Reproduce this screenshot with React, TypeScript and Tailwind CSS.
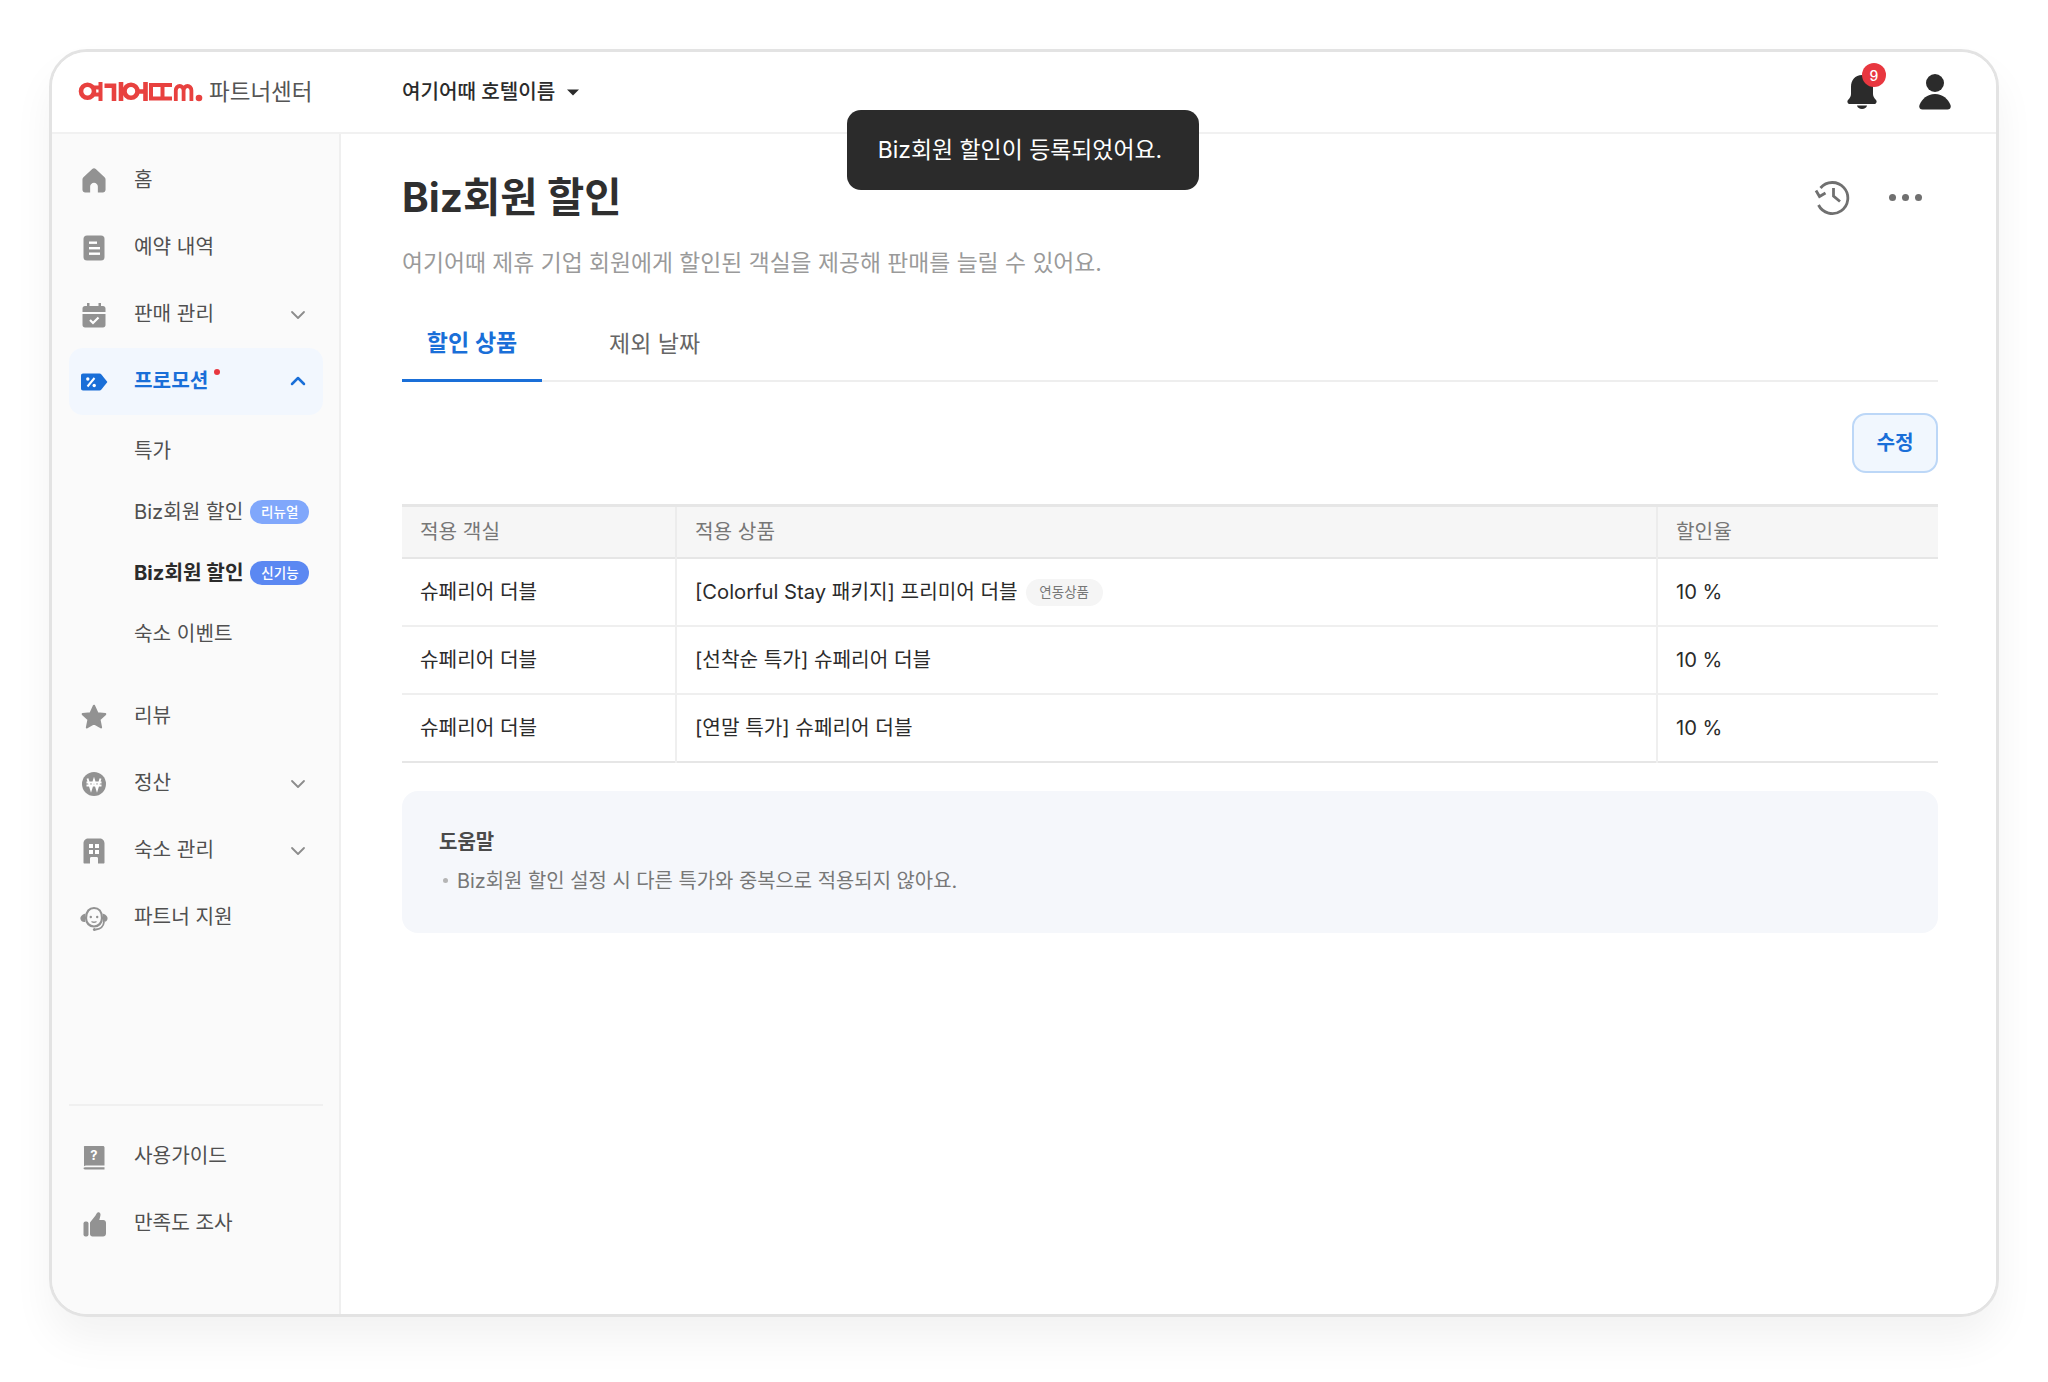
import React from "react";
import { ChevronDown, ChevronUp } from "lucide-react";

const G = "#929292";

function IconBox({ children }: { children: React.ReactNode }) {
  return (
    <svg viewBox="0 0 28 28" className="w-7 h-7 shrink-0">
      {children}
    </svg>
  );
}

const HomeI = () => (
  <IconBox>
    <path transform="translate(-1.400 -1.400) scale(1.100)" fill={G} d="M14 2.500c.6 0 1.100.2 1.600.7l8 7.400c.6.5.9 1.200.9 2v9.400c0 1.400-1.100 2.500-2.500 2.500h-4.500v-5.500c0-1.900-1.600-3.500-3.500-3.500s-3.500 1.600-3.500 3.500v5.500H6c-1.400 0-2.500-1.100-2.500-2.500v-9.400c0-.8.3-1.500.9-2l8-7.400c.5-.5 1-.7 1.600-.7z" />
  </IconBox>
);
const ListI = () => (
  <IconBox>
    <rect x="3.500" y="1.500" width="21" height="25" rx="3.500" fill={G} />
    <rect x="9" y="7.500" width="8" height="2.400" fill="#fff" />
    <rect x="9" y="13" width="11" height="2.400" fill="#fff" />
    <rect x="9" y="18.500" width="11" height="2.400" fill="#fff" />
  </IconBox>
);
const CalI = () => (
  <IconBox>
    <path fill={G} d="M7 2h2.500v3h9V2H21v3h2c1.500 0 2.500 1 2.500 2.500v3.500h-23V7.500C2.500 6 3.500 5 5 5h2z" />
    <path fill={G} d="M2.500 13h23v11c0 1.500-1 2.500-2.500 2.500H5c-1.500 0-2.500-1-2.500-2.500z" />
    <path d="M10 19l3 3 5.500-5.500" stroke="#fff" strokeWidth="2.200" fill="none" />
  </IconBox>
);
const TagI = () => (
  <IconBox>
    <path fill="#1a6fd8" d="M3 5.500h16.500c.8 0 1.400.3 1.900.9l6 7.600-6 7.600c-.5.600-1.100.9-1.900.9H3c-1.200 0-2-.8-2-2V7.500c0-1.200.8-2 2-2z" />
    <path d="M7.500 18.500l7-8.500" stroke="#fff" strokeWidth="2" />
    <circle cx="7.800" cy="11" r="1.700" fill="#fff" />
    <circle cx="14.200" cy="17.500" r="1.700" fill="#fff" />
  </IconBox>
);
const StarI = () => (
  <IconBox>
    <path transform="translate(-1 -1) scale(1.070)" fill={G} stroke={G} strokeWidth="2" strokeLinejoin="round" d="M14 3.500l3.200 7 7.300.8-5.400 5 1.500 7.400L14 20l-6.600 3.700 1.500-7.400-5.400-5 7.300-.8z" />
  </IconBox>
);
const WonI = () => (
  <IconBox>
    <circle cx="14" cy="14" r="12" fill={G} />
    <path d="M7.500 8.500l3.500 11 3-9.500 3 9.500 3.500-11M6.500 12.500h15M6.500 15.500h15" stroke="#fff" strokeWidth="1.900" fill="none" />
  </IconBox>
);
const BuildI = () => (
  <IconBox>
    <path fill={G} d="M8.500 1.500h11c3 0 5 2 5 5v19c0 .6-.4 1-1 1H18v-5c0-1-.6-1.500-1.500-1.500h-5c-.9 0-1.500.5-1.500 1.500v5H4.500c-.6 0-1-.4-1-1v-19c0-3 2-5 5-5z" />
    <rect x="9" y="7" width="4" height="4" fill="#fff" />
    <rect x="15" y="7" width="4" height="4" fill="#fff" />
    <rect x="9" y="13" width="4" height="4" fill="#fff" />
    <rect x="15" y="13" width="4" height="4" fill="#fff" />
  </IconBox>
);
const HeadI = () => (
  <IconBox>
    <path d="M6 14C6 7.500 9.500 4 14 4s8 3.500 8 10c0 5-3.500 8.500-8 8.500S6 19 6 14z" stroke={G} strokeWidth="2.200" fill="none" />
    <path d="M5.500 9.500C1.500 10.500 0 13 .5 15c.3 2 2.500 3.500 4.500 3zM22.500 9.500c4 1 5.500 3.500 5 5.500-.3 2-2.500 3.500-4.500 3z" fill={G} />
    <circle cx="10.800" cy="13" r="1.200" fill={G} />
    <circle cx="17.200" cy="13" r="1.200" fill={G} />
    <path d="M11.500 17.500c1.500 1 3.500 1 5 0" stroke={G} strokeWidth="1.400" fill="none" />
    <path d="M24 18c-.5 4-3.500 7-8 7.500" stroke={G} strokeWidth="1.800" fill="none" />
    <circle cx="14.500" cy="25.500" r="1.600" fill={G} />
  </IconBox>
);
const BookI = () => (
  <IconBox>
    <path fill={G} d="M5 3h18c.8 0 1.500.7 1.500 1.500v18H6c-.9 0-1.500.4-2 .8V4.500C3.500 3.700 4.200 3 5 3z" />
    <path fill={G} d="M6 24.200h18.500V26.500H6c-1.500 0-2.500-.4-2.500-1.200S4.500 24.200 6 24.200z" />
    <text x="14" y="17" textAnchor="middle" fontSize="13" fontWeight="700" fill="#fff" fontFamily="Inter, sans-serif">?</text>
  </IconBox>
);
const ThumbI = () => (
  <IconBox>
    <rect x="3.500" y="11.500" width="5" height="15" rx="2" fill={G} />
    <path fill={G} d="M10 12.500l5.500-7c.7-1.200 1.500-2.800 2.500-3.200 1.500-.5 2.500.7 2.500 2.200 0 1.500-.7 3.500-1.200 5.500h4c1.500 0 2.700 1.200 2.700 2.700v10.800c0 1.700-1.300 3-3 3H12.500c-1.500 0-2.500-1-2.500-2.500z" />
  </IconBox>
);

function Logo() {
  const c = "#e8413f";
  return (
    <svg viewBox="0 0 132 32" className="w-[132px] h-8 shrink-0" fill="none" stroke={c} strokeWidth="4.600">
      <ellipse cx="12.500" cy="15.300" rx="6.500" ry="6.500" />
      <path d="M25.500 6v19M19 11.500h6.500M19 18.500h6.500" strokeWidth="4" />
      <path d="M29.500 9.800h9.500v15.200" />
      <path d="M46 6v19" />
      <ellipse cx="56" cy="15.300" rx="6.500" ry="6.500" />
      <path d="M70.500 6v19M63 15.500h7.500" />
      <path d="M85.500 9h-9.500v13.500h9.500M97 9h-9.500v13.500h9.500" strokeWidth="4" />
      <path d="M100.800 25V14.500c0-6 7.800-6 7.800 0V25M108.600 14.500c0-6 7.800-6 7.800 0V25" strokeWidth="3.800" />
      <circle cx="124" cy="22" r="3.300" fill={c} stroke="none" />
    </svg>
  );
}

function NavRow({
  icon,
  label,
  chevron,
  active,
  dot,
}: {
  icon: React.ReactNode;
  label: string;
  chevron?: "down" | "up";
  active?: boolean;
  dot?: boolean;
}) {
  return (
    <div className={`flex items-center h-[67px] pl-[11px] pr-[13px] rounded-[14px] ${active ? "bg-[#f2f7fe]" : ""}`}>
      {icon}
      <span className={`relative ml-[26px] text-[20.2px] ${active ? "font-semibold text-[#1a6fd8]" : "text-[#505050]"}`}>
        {label}
        {dot && <span className="absolute -right-[12px] top-[3px] w-[6px] h-[6px] rounded-full bg-[#e8373f]" />}
      </span>
      <span className="flex-1" />
      {chevron === "down" && <ChevronDown className="w-6 h-6 text-[#8c8c8c]" strokeWidth={1.800} />}
      {chevron === "up" && <ChevronUp className="w-6 h-6 -mt-[2px] text-[#1a6fd8]" strokeWidth={2.500} />}
    </div>
  );
}

function SubRow({ label, bold, badge, badgeClass }: { label: string; bold?: boolean; badge?: string; badgeClass?: string }) {
  return (
    <div className="flex items-center h-[61px] pl-[65px]">
      <span className={`text-[20.2px] whitespace-nowrap ${bold ? "font-bold text-[#2b2b2b]" : "text-[#505050]"}`}>{label}</span>
      {badge && (
        <span className={`ml-[7px] w-[59px] h-6 -mt-px rounded-full flex items-center justify-center text-[13.500px] font-medium text-white ${badgeClass}`}>
          {badge}
        </span>
      )}
    </div>
  );
}

function Sidebar() {
  return (
    <aside className="w-[289px] shrink-0 flex flex-col bg-[#fafafa] border-r-2 border-[#efefef] pl-[17px] pr-4 pt-[13px] pb-[57px]">
      <NavRow icon={<HomeI />} label="홈" />
      <NavRow icon={<ListI />} label="예약 내역" />
      <NavRow icon={<CalI />} label="판매 관리" chevron="down" />
      <NavRow icon={<TagI />} label="프로모션" chevron="up" active dot />
      <div className="pt-[6px] pb-[18px]">
        <SubRow label="특가" />
        <SubRow label="Biz회원 할인" badge="리뉴얼" badgeClass="bg-[#80a7fb]" />
        <SubRow label="Biz회원 할인" bold badge="신기능" badgeClass="bg-[#5b88f2]" />
        <SubRow label="숙소 이벤트" />
      </div>
      <NavRow icon={<StarI />} label="리뷰" />
      <NavRow icon={<WonI />} label="정산" chevron="down" />
      <NavRow icon={<BuildI />} label="숙소 관리" chevron="down" />
      <NavRow icon={<HeadI />} label="파트너 지원" />
      <div className="flex-1" />
      <div className="h-[2px] bg-[#f0f0f0] mb-[17px]" />
      <NavRow icon={<BookI />} label="사용가이드" />
      <NavRow icon={<ThumbI />} label="만족도 조사" />
    </aside>
  );
}

function Header() {
  return (
    <header className="h-[82px] shrink-0 flex items-center border-b-2 border-[#f1f1f1] bg-white pl-[23px] pr-[45px]">
      <div className="w-[327px] flex items-center shrink-0">
        <Logo />
        <span className="ml-[2px] text-[22.500px] text-[#555555]">파트너센터</span>
      </div>
      <span className="text-[20.100px] font-medium text-[#2b2b2b]">여기어때 호텔이름</span>
      <svg viewBox="0 0 12 7" className="w-3 h-[7px] ml-3">
        <path d="M0 .5h12L6 6.500z" fill="#2b2b2b" />
      </svg>
      <div className="flex-1" />
      <div className="relative w-[30px] h-[34px]">
        <svg viewBox="0 0 30 34" className="w-[30px] h-[34px]">
          <path fill="#2b2b2b" d="M15 0c7 0 11 5 11 12v7c0 2 1 4 3 6 1.200 1.200.6 4-1.500 4h-25C.4 29-.2 26.200 1 25c2-2 3-4 3-6v-7C4 5 8 0 15 0z" />
          <path fill="#2b2b2b" d="M10 30.500h10c-.3 2-2.500 3.500-5 3.500s-4.700-1.500-5-3.500z" />
        </svg>
        <span className="absolute -top-[12px] left-[15px] w-6 h-6 rounded-full bg-[#e8373f] flex items-center justify-center text-[14px] font-medium text-white">9</span>
      </div>
      <svg viewBox="0 0 32 36" className="w-8 h-9 ml-[42px]">
        <circle cx="16" cy="9" r="9" fill="#2b2b2b" />
        <path fill="#2b2b2b" d="M16 20c8 0 13 5 15.500 11 .8 2.500-.5 4.500-3 4.500h-25c-2.500 0-3.800-2-3-4.500C3 25 8 20 16 20z" />
      </svg>
    </header>
  );
}

const rows = [
  { room: "슈페리어 더블", product: "[Colorful Stay 패키지] 프리미어 더블", tag: true },
  { room: "슈페리어 더블", product: "[선착순 특가] 슈페리어 더블" },
  { room: "슈페리어 더블", product: "[연말 특가] 슈페리어 더블" },
];

function Content() {
  return (
    <main className="flex-1 min-w-0 bg-white pl-[61px] pr-[58px] pt-[36px]">
      <div className="flex items-center justify-between h-14">
        <h1 className="text-[40.500px] font-bold text-[#2f2f2f] leading-[56px]">Biz회원 할인</h1>
        <div className="flex items-center mr-[16px] -mt-[2px]">
          <svg viewBox="0 0 38 36" className="w-[38px] h-9" fill="none" stroke="#707070" strokeWidth="2.800">
            <path d="M6.500 9A15.500 15.500 0 1 1 4.500 26" />
            <path d="M2 11.500l3.500 6 6-3.500" />
            <path d="M19.500 9v8l6.500 5.500" />
          </svg>
          <div className="flex items-center gap-[6px] ml-[37px]">
            <span className="w-[7px] h-[7px] rounded-full bg-[#707070]" />
            <span className="w-[7px] h-[7px] rounded-full bg-[#707070]" />
            <span className="w-[7px] h-[7px] rounded-full bg-[#707070]" />
          </div>
        </div>
      </div>
      <p className="mt-[21px] text-[22.800px] leading-8 text-[#9a9a9a]">여기어때 제휴 기업 회원에게 할인된 객실을 제공해 판매를 늘릴 수 있어요.</p>
      <div className="mt-[38px] flex h-[65px] border-b-2 border-[#eeeeee]">
        <div className="w-[140px] h-[65px] pb-[10px] border-b-[3px] border-[#1a6fd8] flex items-center justify-center text-[23px] font-semibold text-[#1a6fd8]">할인 상품</div>
        <div className="w-[158px] h-[65px] pb-[10px] pl-[67px] flex items-center text-[23px] text-[#666666] whitespace-nowrap">제외 날짜</div>
      </div>
      <div className="mt-[31px] flex justify-end">
        <button className="w-[86px] h-[60px] rounded-[14px] border-2 border-[#bcd7f7] bg-[#f1f7fe] text-[20.200px] font-semibold text-[#1a6fd8]">수정</button>
      </div>
      <table className="mt-[31px] w-full table-fixed border-collapse text-[20.200px] text-[#2b2b2b]">
        <colgroup>
          <col className="w-[274px]" />
          <col className="w-[981px]" />
          <col />
        </colgroup>
        <thead>
          <tr className="h-[52px] bg-[#f6f6f6] border-t-[3px] border-b-2 border-[#e6e6e6]">
            <th className="font-normal text-left text-[#777777] pl-[18px] border-r-2 border-[#ececec]">적용 객실</th>
            <th className="font-normal text-left text-[#777777] pl-[18px] border-r-2 border-[#ececec]">적용 상품</th>
            <th className="font-normal text-left text-[#777777] pl-[18px]">할인율</th>
          </tr>
        </thead>
        <tbody>
          {rows.map((r, i) => (
            <tr key={i} className={`h-[68px] border-b-2 ${i === 2 ? "border-[#e6e6e6]" : "border-[#efefef]"}`}>
              <td className="pl-[18px] pt-[2px] border-r-2 border-[#efefef]">{r.room}</td>
              <td className="pl-[18px] pt-[2px] border-r-2 border-[#efefef]">
                <div className="flex items-center">
                  {r.product}
                  {r.tag && (
                    <span className="ml-[8px] w-[77px] h-[27px] rounded-full bg-[#f5f5f5] flex items-center justify-center text-[13.500px] text-[#777777]">연동상품</span>
                  )}
                </div>
              </td>
              <td className="pl-[18px] pt-[2px]">10 %</td>
            </tr>
          ))}
        </tbody>
      </table>
      <div className="mt-[28px] h-[142px] rounded-[16px] bg-[#f5f7fb] px-[37px] pt-[37px]">
        <div className="text-[20px] font-semibold leading-[28px] text-[#4a4a4a]">도움말</div>
        <div className="mt-[11px] flex items-center text-[19.900px] leading-[28px] text-[#777777]">
          <span className="ml-[4px] w-[5px] h-[5px] rounded-full bg-[#b5b5b5]" />
          <span className="ml-[9px]">Biz회원 할인 설정 시 다른 특가와 중복으로 적용되지 않아요.</span>
        </div>
      </div>
    </main>
  );
}

export default function App() {
  return (
    <div className="w-[2048px] h-[1382px] bg-white pl-[49px] pt-[49px] font-['Inter','Noto_Sans_CJK_KR',sans-serif]">
      <div className="relative w-[1950px] h-[1268px] rounded-[38px] border-[3px] border-[#e3e3e3] bg-white flex flex-col overflow-hidden shadow-[0_24px_40px_rgba(0,0,0,0.05)]">
        <Header />
        <div className="flex flex-1 min-h-0">
          <Sidebar />
          <Content />
        </div>
        <div className="absolute left-[795px] top-[58px] w-[352px] h-[80px] pr-[6px] rounded-[14px] bg-[#2b2b2b] flex items-center justify-center text-[22.900px] text-white">
          Biz회원 할인이 등록되었어요.
        </div>
      </div>
    </div>
  );
}
